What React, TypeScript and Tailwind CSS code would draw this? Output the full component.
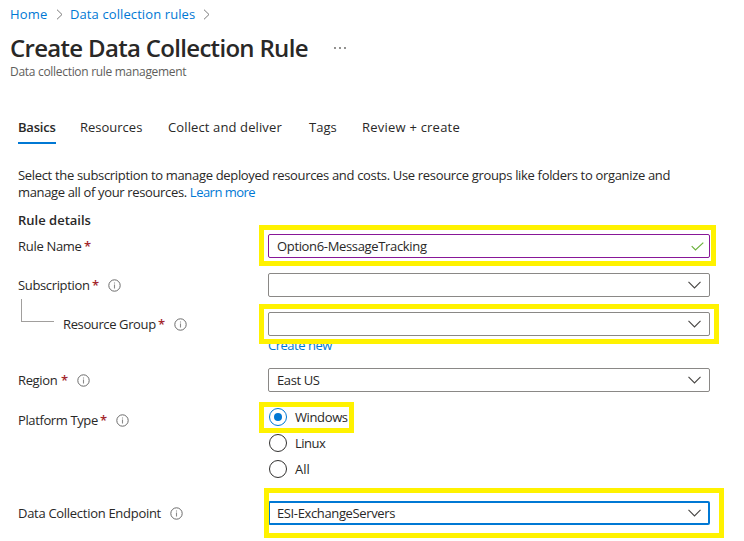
import type { ReactNode } from "react";

function Info() {
  return (
    <svg width="13" height="13" viewBox="0 0 13 13" fill="none" className="block shrink-0">
      <circle cx="6.5" cy="6.5" r="5.7" stroke="#6b6b6b" />
      <path d="M6.5 5.6v3.9M6.5 3.4v1.2" stroke="#8a8a8a" strokeWidth="1.1" />
    </svg>
  );
}

function Chevron() {
  return (
    <svg width="13" height="8" viewBox="0 0 13 8" fill="none" className="shrink-0">
      <path d="M0.5 0.9L6.5 7L12.5 0.9" stroke="#484644" strokeWidth="1.1" />
    </svg>
  );
}

function Separator({ className }: { className: string }) {
  return (
    <svg width="7" height="11" viewBox="0 0 7 11" fill="none" className={className}>
      <path d="M1 0.7L6 5.5L1 10.3" stroke="#7a7a7a" />
    </svg>
  );
}

function Highlight({ className }: { className: string }) {
  return <div className={`pointer-events-none absolute z-10 border-[5px] border-[#fff200] ${className}`} />;
}

function Row({
  label,
  required,
  info,
  width,
  className = "",
  children,
}: {
  label: string;
  required?: boolean;
  info?: boolean;
  width: string;
  className?: string;
  children: ReactNode;
}) {
  return (
    <div className={`flex h-6 items-center ${className}`}>
      <div className="flex w-[250px] shrink-0 items-center whitespace-nowrap">
        <span className={width}>{label}</span>
        {required && <span className="ml-[3px] w-[7px] font-semibold text-[#a4262c]">*</span>}
        {info && <span className="ml-[9px]"><Info /></span>}
      </div>
      {children}
    </div>
  );
}

function Field({ value, border, tracking = "", children }: { value?: string; border: string; tracking?: string; children: ReactNode }) {
  return (
    <div className={`flex h-6 w-[442px] items-center justify-between rounded-[2px] bg-white ${border}`}>
      <span className={`whitespace-nowrap ${tracking}`}>{value}</span>
      {children}
    </div>
  );
}

const gray = "border border-[#8a8886] pl-2 pr-2";

function Radio({ label, checked, tracking }: { label: string; checked?: boolean; tracking: string }) {
  return (
    <label className="flex h-[26px] items-center">
      <span className={`flex size-[18px] items-center justify-center rounded-full border ${checked ? "border-[#0078d4]" : "border-[#323130]"}`}>
        {checked && <span className="size-2 rounded-full bg-[#0078d4]" />}
      </span>
      <span className={`ml-2 ${tracking}`}>{label}</span>
    </label>
  );
}

export default function App() {
  return (
    <div className="relative h-[541px] w-[744px] overflow-hidden bg-white font-['Open_Sans','Noto_Sans',sans-serif] text-[13px] leading-[17px] text-[#292827]">
      <nav className="flex h-7 items-center pl-[10px] whitespace-nowrap text-[#0078d4]">
        <a className="w-[37px] tracking-[0.15px]">Home</a>
        <Separator className="ml-[9px]" />
        <a className="ml-[7px] w-[125px] tracking-[0.1px]">Data collection rules</a>
        <Separator className="ml-2" />
      </nav>
      <header className="pl-[10px]">
        <div className="flex h-10 items-center">
          <h1 className="w-[298px] whitespace-nowrap text-2xl font-semibold tracking-[-0.69px]">Create Data Collection Rule</h1>
          <svg width="12" height="2" viewBox="0 0 12 2" className="ml-[26px]" fill="#605e5c">
            <circle cx="1" cy="1" r="0.9" />
            <circle cx="6" cy="1" r="0.9" />
            <circle cx="11" cy="1" r="0.9" />
          </svg>
        </div>
        <p className="-mt-1 h-4 text-xs leading-4 tracking-[-0.3px] whitespace-nowrap text-[#605e5c]">Data collection rule management</p>
      </header>

      <div className="mt-[39px] flex pl-[18px] whitespace-nowrap">
        <span className="h-[25px] w-[38px] border-b-2 border-[#0078d4] font-semibold tracking-[-0.22px]">Basics</span>
        <span className="ml-6 w-[62px]">Resources</span>
        <span className="ml-[26px] w-[115px] tracking-[0.12px]">Collect and deliver</span>
        <span className="ml-[26px] w-[27px]">Tags</span>
        <span className="ml-[26px] tracking-[0.22px]">Review + create</span>
      </div>

      <main className="pl-[18px]">
        <p className="mt-[23px] whitespace-nowrap tracking-[-0.325px]">
          Select the subscription to manage deployed resources and costs. Use resource groups like folders to organize and
          <br />
          <span className="tracking-[-0.35px]">manage all of your resources. </span><a className="tracking-[-0.52px] text-[#0078d4]">Learn more</a>
        </p>
        <h2 className="mt-[11px] font-semibold">Rule details</h2>

        <Row label="Rule Name" required width="w-[63px] tracking-[-0.3px]" className="mt-[5px]">
          <Field value="Option6-MessageTracking" border="border border-[#881798] pl-2 pr-[5px]" tracking="tracking-[-0.34px]">
            <svg width="13" height="9" viewBox="0 0 13 9" fill="none">
              <path d="M0.7 4.2L4.5 8L12.3 0.6" stroke="#6bb13c" strokeWidth="1.2" />
            </svg>
          </Field>
        </Row>
        <Row label="Subscription" required info width="w-[71px] tracking-[-0.35px]" className="mt-[15px]">
          <Field border={gray}><Chevron /></Field>
        </Row>
        <div className="relative pt-[15px]">
          <span className="absolute top-[2px] left-[3px] h-[23px] w-[33px] border-b border-l border-[#a19f9d]" />
          <Row label="Resource Group" required info width="ml-[45px] w-[92px] tracking-[-0.38px]">
            <Field border={gray}><Chevron /></Field>
          </Row>
        </div>
        <a className="mt-[1px] ml-[250px] block h-[17px] tracking-[-0.48px] text-[#0078d4]">Create new</a>
        <Row label="Region" required info width="w-10 tracking-[-0.35px]" className="mt-[14px]">
          <Field value="East US" border={gray} tracking="tracking-[-0.4px]"><Chevron /></Field>
        </Row>
        <div className="mt-3 flex">
          <div className="w-[250px] shrink-0">
            <Row label="Platform Type" required info width="w-[79px] tracking-[-0.38px]" className="mt-1">{null}</Row>
          </div>
          <div className="flex flex-col pl-[1px]">
            <Radio label="Windows" checked tracking="tracking-[-0.38px]" />
            <Radio label="Linux" tracking="tracking-[-0.5px]" />
            <Radio label="All" tracking="" />
          </div>
        </div>
        <Row label="Data Collection Endpoint" info width="w-[143px] tracking-[-0.29px]" className="mt-[19px]">
          <Field value="ESI-ExchangeServers" border="border-2 border-[#0078d4] px-[7px]" tracking="tracking-[-0.37px]"><Chevron /></Field>
        </Row>
      </main>

      <Highlight className="top-[225px] left-[259px] h-[41px] w-[457px]" />
      <Highlight className="top-[304px] left-[259px] h-10 w-[460px]" />
      <Highlight className="top-[402px] left-[259px] h-[31px] w-[95px]" />
      <Highlight className="top-[488px] left-[264px] h-[50px] w-[460px]" />
    </div>
  );
}
